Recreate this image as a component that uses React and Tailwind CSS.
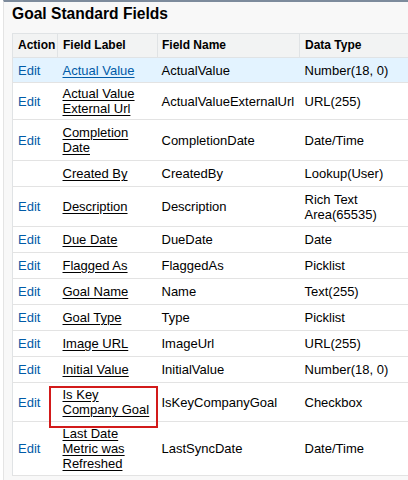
import React from "react";

const rows = [
  { edit: true, label: ["Actual Value"], name: "ActualValue", type: ["Number(18, 0)"], h: 25, hover: true },
  { edit: true, label: ["Actual Value", "External Url"], name: "ActualValueExternalUrl", type: ["URL(255)"], h: 37 },
  { edit: true, label: ["Completion", "Date"], name: "CompletionDate", type: ["Date/Time"], h: 41 },
  { edit: false, label: ["Created By"], name: "CreatedBy", type: ["Lookup(User)"], h: 26 },
  { edit: true, label: ["Description"], name: "Description", type: ["Rich Text", "Area(65535)"], h: 40 },
  { edit: true, label: ["Due Date"], name: "DueDate", type: ["Date"], h: 26 },
  { edit: true, label: ["Flagged As"], name: "FlaggedAs", type: ["Picklist"], h: 26 },
  { edit: true, label: ["Goal Name"], name: "Name", type: ["Text(255)"], h: 26 },
  { edit: true, label: ["Goal Type"], name: "Type", type: ["Picklist"], h: 26 },
  { edit: true, label: ["Image URL"], name: "ImageUrl", type: ["URL(255)"], h: 26 },
  { edit: true, label: ["Initial Value"], name: "InitialValue", type: ["Number(18, 0)"], h: 26 },
  { edit: true, label: ["Is Key", "Company Goal"], name: "IsKeyCompanyGoal", type: ["Checkbox"], h: 39, boxed: true },
  { edit: true, label: ["Last Date", "Metric was", "Refreshed"], name: "LastSyncDate", type: ["Date/Time"], h: 54 },
];

const Lines = ({ lines }) =>
  lines.map((l, i) => (
    <React.Fragment key={i}>
      {i > 0 && <br />}
      {l}
    </React.Fragment>
  ));

export default function App() {
  return (
    <div
      className="h-[480px] w-[408px] overflow-hidden bg-white pl-[3px]"
      style={{ fontFamily: '"Liberation Sans", Arial, sans-serif' }}
    >
      <div className="h-full overflow-hidden border-t-2 border-l border-t-[#7d8b9c] border-l-[#e4e4e4] bg-[#f8f8f8] pl-[8px]">
        {/* Title */}
        <h2 className="h-[31px] pt-[3px] text-[15.6px] font-bold leading-[18px] text-black">
          Goal Standard Fields
        </h2>

        {/* Table */}
        <table className="w-[410px] table-fixed border-collapse border-l border-[#e0e3e5] bg-white text-[13px] leading-[15px] text-black">
          <colgroup>
            <col className="w-[45px]" />
            <col className="w-[100px]" />
            <col className="w-[142px]" />
            <col className="w-[123px]" />
          </colgroup>
          <thead>
            <tr className="h-[24px] bg-[#f2f3f3] text-left text-[12px] font-bold">
              <th className="border border-[#e0e3e5] px-[5px]">Action</th>
              <th className="border border-[#e0e3e5] px-[5px]">Field Label</th>
              <th className="border border-[#e0e3e5] px-[4px]">Field Name</th>
              <th className="border border-[#e0e3e5] px-[5px]">Data Type</th>
            </tr>
          </thead>
          <tbody>
            {rows.map((r, i) => (
              <tr
                key={i}
                style={{ height: r.h }}
                className={`border-b border-[#e3e3e3] ${r.hover ? "bg-[#e3f3ff]" : ""}`}
              >
                <td className="px-[5px] align-middle text-[#015ba7]">{r.edit ? "Edit" : ""}</td>
                <td className="relative px-[5px] align-middle">
                  <a
                    href="#"
                    className={`underline underline-offset-[2px] ${r.hover ? "text-[#015ba7]" : "text-black"}`}
                  >
                    <Lines lines={r.label} />
                  </a>
                  {r.boxed && (
                    <div className="pointer-events-none absolute left-[-9px] top-[3px] h-[42px] w-[109px] border-2 border-[#d21a1a]" />
                  )}
                </td>
                <td className="whitespace-nowrap px-[4px] align-middle">{r.name}</td>
                <td className="px-[5px] align-middle">
                  <Lines lines={r.type} />
                </td>
              </tr>
            ))}
          </tbody>
        </table>
      </div>
    </div>
  );
}
